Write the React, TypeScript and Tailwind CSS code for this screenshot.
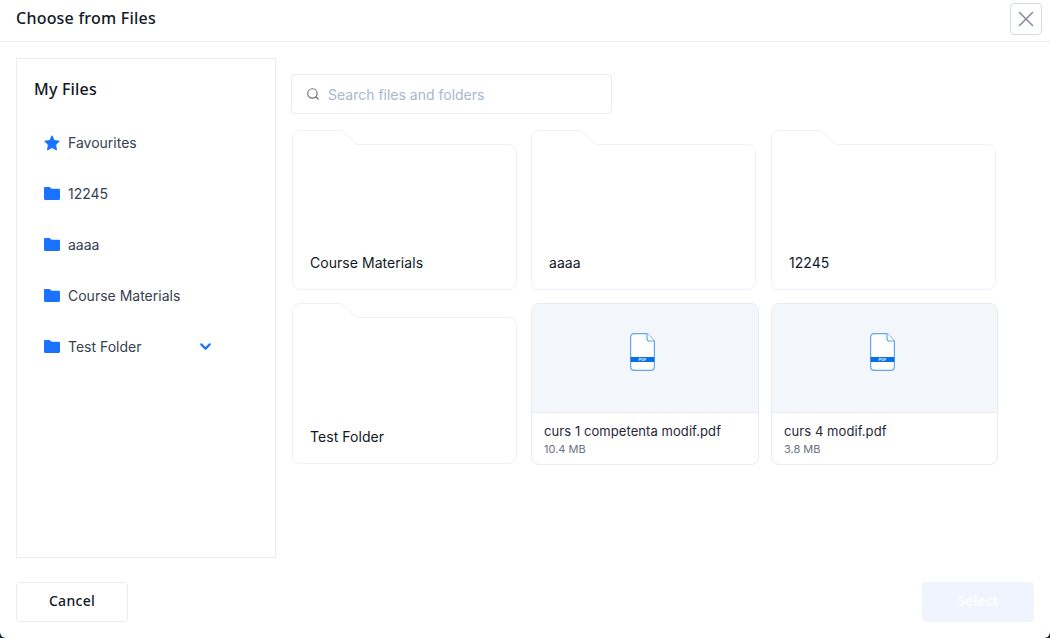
import { ChevronDown, Search, X } from "lucide-react"

const sidebarFolders = ["12245", "aaaa", "Course Materials", "Test Folder"]

const gridItems = [
  { type: "folder", name: "Course Materials", height: 160 },
  { type: "folder", name: "aaaa", height: 160 },
  { type: "folder", name: "12245", height: 160 },
  { type: "folder", name: "Test Folder", height: 161 },
  { type: "file", name: "curs 1 competenta modif.pdf", size: "10.4 MB" },
  { type: "file", name: "curs 4 modif.pdf", size: "3.8 MB" },
]

function FolderIcon() {
  return (
    <svg width="16" height="13" viewBox="0 0 16 13" className="shrink-0">
      <path d="M0 1.200C0 .5.5 0 1.200 0H5.500L7.500 1.800H14.800C15.500 1.800 16 2.300 16 3V11.800C16 12.500 15.500 13 14.800 13H1.200C.5 13 0 12.500 0 11.800Z" fill="#1A73FF" />
    </svg>
  )
}

function StarIcon() {
  return (
    <svg width="16" height="16" viewBox="0 0 16 16" className="shrink-0">
      <path d="M8 .8l2.200 4.700 5.100.7-3.700 3.600.9 5.100L8 12.500l-4.500 2.400.9-5.100L.7 6.200l5.100-.7z" fill="#1A73FF" stroke="#1A73FF" strokeLinejoin="round" />
    </svg>
  )
}

function PdfIcon() {
  return (
    <svg width="25" height="38" viewBox="0 0 25 38" className="mr-[5px] mb-3">
      <path d="M4 .6H17L24.400 8V33.500C24.400 35.800 22.800 37.400 20.500 37.400H4.500C2.200 37.400 .6 35.800 .6 33.500V4.500C.6 2.200 2.200 .6 4 .6Z" fill="#fff" stroke="#5EA5F5" strokeWidth="1.200" />
      <path d="M17 .6V5.500C17 7 18 8 19.500 8H24.400" fill="#fff" stroke="#5EA5F5" strokeWidth="1.200" />
      <rect x=".6" y="24" width="23.800" height="5" fill="#0A6FE0" />
      <text x="12.500" y="28.100" textAnchor="middle" fontSize="4" fontWeight="700" fill="#DCEBFB" fontFamily="Inter, sans-serif">
        PDF
      </text>
    </svg>
  )
}

function FolderCard({ name, height }: { name: string; height: number }) {
  const bottom = height - 0.5
  return (
    <div className="relative w-[225px] self-start" style={{ height }}>
      <svg width="225" height={height} viewBox={`0 0 225 ${height}`} className="absolute inset-0">
        <path
          d={`M8.500 .5H47C49 .5 50.500 1.200 52 2.500L60 10C62 12.500 64 14.500 67 14.500H216C220.500 14.500 224.500 18 224.500 22.500V${bottom - 8}C224.500 ${bottom - 3.500} 220.500 ${bottom} 216 ${bottom}H8.500C4 ${bottom} .5 ${bottom - 3.500} .5 ${bottom - 8}V8.500C.5 4 4 .5 8.500 .5Z`}
          fill="#fff"
          stroke="#EEF0F6"
        />
      </svg>
      <div className="relative flex h-full items-end pb-[17px] pl-[18px] text-[14px] leading-5 tracking-[0.05px] text-[#111827]">
        {name}
      </div>
    </div>
  )
}

function FileCard({ name, size }: { name: string; size: string }) {
  return (
    <div className="h-[162px] w-full overflow-hidden rounded-lg border border-[#E7EAF1] bg-white">
      <div className="flex h-[109px] items-center justify-center border-b border-[#E7EAF1] bg-[#F3F6FB]">
        <PdfIcon />
      </div>
      <div className="pt-[9px] pl-3">
        <div className="text-[13px] leading-[18px] tracking-[0.07px] text-[#1F2937]">{name}</div>
        <div className="mt-[2px] text-[11px] leading-[14px] text-[#6B7280]">{size}</div>
      </div>
    </div>
  )
}

export default function App() {
  return (
    <div className="h-[638px] w-[1050px] overflow-hidden bg-[#1F2A3C] font-['Inter',sans-serif]">
      <div className="flex h-full flex-col rounded-b-md bg-white">
        <div className="flex h-[42px] shrink-0 items-center justify-between border-b border-[#E8EAF0] pr-2 pl-4">
          <h1 className="pb-[5px] font-['Noto_Sans',sans-serif] text-[16px] font-medium tracking-[0.22px] text-[#111827]">
            Choose from Files
          </h1>
          <button className="mt-[-4px] flex h-8 w-8 items-center justify-center rounded border border-[#D5DAEA] text-[#868C98]">
            <X size={26} strokeWidth={1.400} />
          </button>
        </div>

        <div className="flex min-h-0 flex-1 pt-4 pl-4">
          <aside className="h-[500px] w-[260px] shrink-0 border border-[#E8EBF2] pt-5 pl-[17px]">
            <h2 className="font-['Noto_Sans',sans-serif] text-[16px] leading-5 font-medium tracking-[0.2px] text-[#111827]">
              My Files
            </h2>
            <ul className="mt-[18px] flex flex-col text-[14px] text-[#374151]">
              <li className="flex h-[51px] items-center gap-2 pl-[10px]">
                <StarIcon />
                <span>Favourites</span>
              </li>
              {sidebarFolders.map((name) => (
                <li key={name} className="flex h-[51px] w-[180px] items-center gap-2 pl-[10px]">
                  <FolderIcon />
                  <span>{name}</span>
                  {name === "Test Folder" && (
                    <ChevronDown size={17} strokeWidth={3} className="ml-auto text-[#1A73FF]" />
                  )}
                </li>
              ))}
            </ul>
          </aside>

          <main className="pt-4 pl-[15px]">
            <div className="flex h-10 w-[321px] items-center gap-2 rounded border border-[#E8EBF2] pl-[14px]">
              <Search size={14} className="text-[#6B7280]" />
              <span className="text-[14px] text-[#A9B6D0]">Search files and folders</span>
            </div>
            <div className="mt-4 ml-px grid grid-cols-[239px_240px_227px] grid-rows-[160px_162px] gap-y-[13px] [&>*:nth-child(5)]:w-[228px]">
              {gridItems.map((item) =>
                item.type === "folder" ? (
                  <FolderCard key={item.name} name={item.name} height={item.height ?? 160} />
                ) : (
                  <FileCard key={item.name} name={item.name} size={item.size ?? ""} />
                )
              )}
            </div>
          </main>
        </div>

        <div className="flex h-[56px] shrink-0 items-start justify-between px-4">
          <button className="h-10 w-[112px] rounded border border-[#E8EBF2] pb-1 font-['Noto_Sans',sans-serif] text-[14px] font-medium tracking-[0.3px] text-[#111827]">
            Cancel
          </button>
          <button className="h-10 w-[112px] rounded bg-[#EFF4FE] pb-1 font-['Noto_Sans',sans-serif] text-[14px] font-semibold text-white">
            Select
          </button>
        </div>
      </div>
    </div>
  )
}
